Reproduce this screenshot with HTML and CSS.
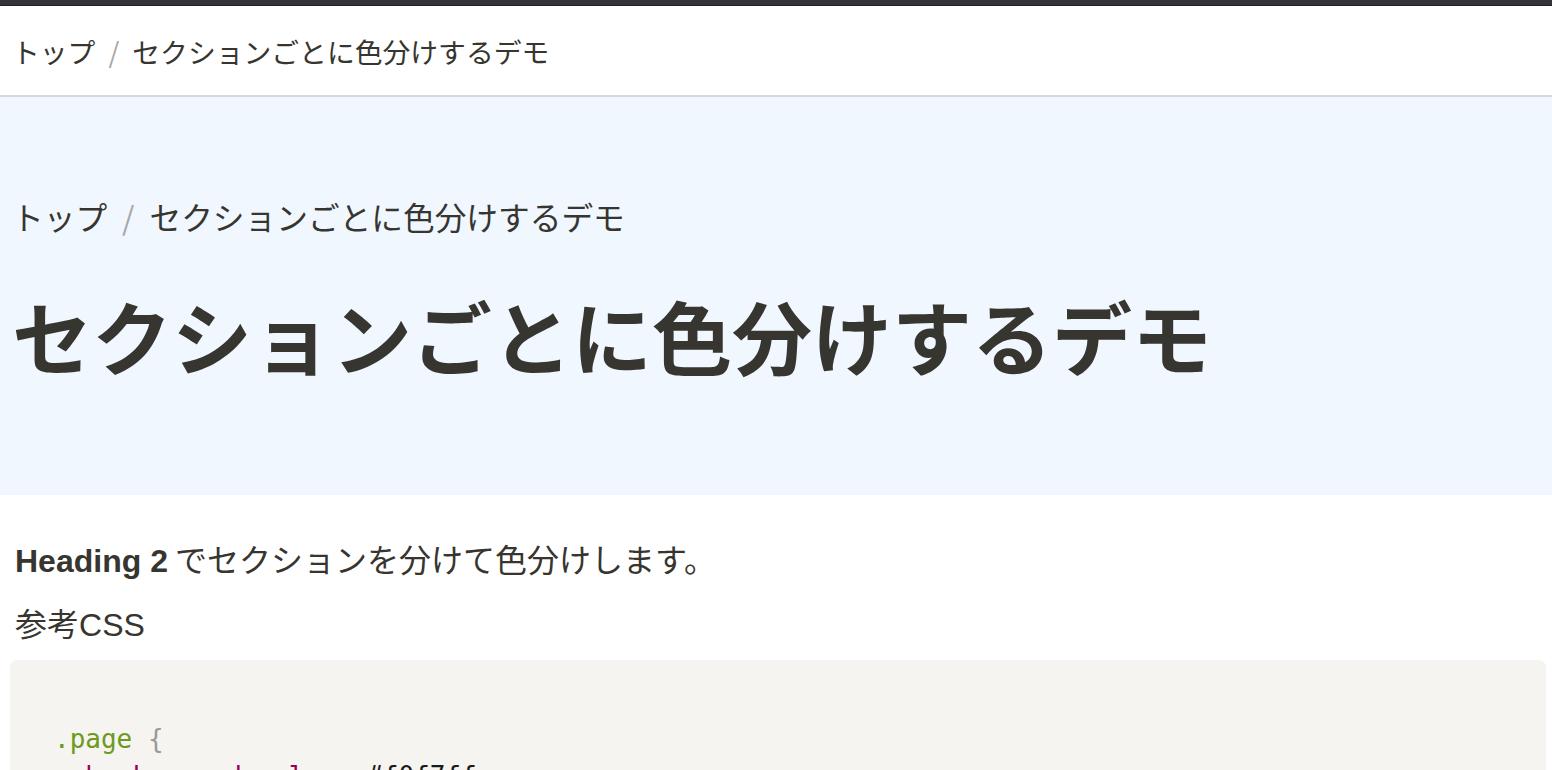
FILE: index.html
```html
<!DOCTYPE html>
<html lang="ja">
<head>
<meta charset="utf-8">
<title>セクションごとに色分けするデモ</title>
<link rel="stylesheet" href="styles.css">
</head>
<body>
<div class="topbar"></div>
<header class="site-header">
  <nav class="crumbs crumbs-small"><span>トップ</span><span class="sep">/</span><span>セクションごとに色分けするデモ</span></nav>
</header>
<section class="hero">
  <nav class="crumbs crumbs-large"><span>トップ</span><span class="sep">/</span><span>セクションごとに色分けするデモ</span></nav>
  <h1 class="title">セクションごとに色分けするデモ</h1>
</section>
<main class="content">
  <p class="para"><strong class="en">Heading 2</strong> でセクションを分けて色分けします。</p>
  <p class="para">参考<span class="en">CSS</span></p>
  <pre class="code"><code>
<span class="sel">.page</span> <span class="punc">{</span>
  <span class="prop">background-color</span><span class="punc">:</span> #f0f7ff<span class="punc">;</span>
<span class="punc">}</span></code></pre>
</main>
</body>
</html>
```
FILE: styles.css
```css
* { box-sizing: border-box; }
html, body { margin: 0; padding: 0; }
body {
  background: #ffffff;
  color: #37352f;
  font-family: "Noto Sans CJK JP", "Liberation Sans", sans-serif;
  overflow: hidden;
}
.topbar {
  height: 6px;
  background: #333438;
  border-bottom: 1px solid #1f1f21;
}
.site-header {
  height: 91px;
  display: flex;
  align-items: center;
  padding: 0 12px;
  border-bottom: 2px solid #d4d7dc;
}
.crumbs {
  display: flex;
  align-items: center;
  color: #37352f;
}
.crumbs-small { font-size: 27.8px; }
.crumbs-small .sep { margin: 0 13px; color: #a8a8a8; }
.crumbs-large { font-size: 31.7px; }
.crumbs-large .sep { margin: 0 15px; color: #a8a8a8; }
.hero {
  background: #f0f7ff;
  height: 398px;
  padding: 96px 12px 0 12px;
}
.title {
  margin: 47px 0 0 0;
  font-size: 80px;
  font-weight: 700;
  line-height: 1.2;
  color: #37352f;
}
.content {
  padding: 0 6px 0 10px;
}
.para {
  margin: 0;
  padding-left: 5px;
  font-size: 32px;
  line-height: 61px;
  color: #37352f;
}
.para:first-child { margin-top: 33px; }
.en {
  font-family: "Liberation Sans", "Noto Sans CJK JP", sans-serif;
  font-size: 32px;
}
strong.en { font-weight: 700; }
.code {
  margin: 4px 0 0 0;
  background: #f5f4f0;
  border-radius: 7px;
  padding: 24px 44px;
  font-family: "DejaVu Sans Mono", monospace;
  font-size: 26px;
  line-height: 37px;
  color: #1a1a1a;
  white-space: pre;
  overflow: hidden;
}
.sel { color: #6d9a1e; }
.punc { color: #999999; }
.prop { color: #990055; }
```
